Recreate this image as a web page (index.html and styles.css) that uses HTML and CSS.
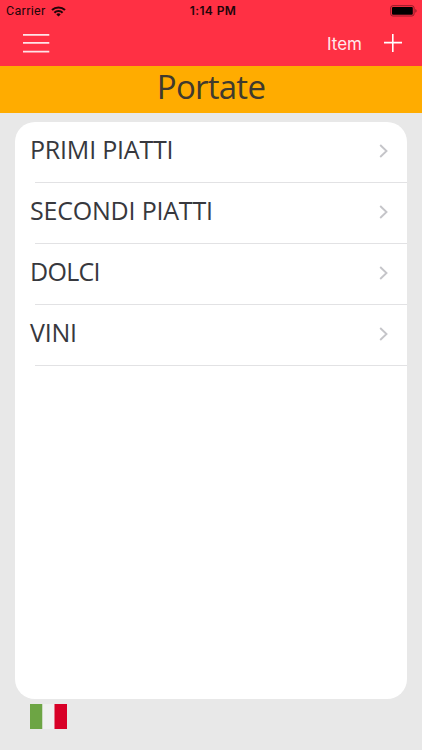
FILE: index.html
```html
<!DOCTYPE html>
<html lang="it">
<head>
<meta charset="utf-8">
<title>Portate</title>
<link rel="stylesheet" href="styles.css">
</head>
<body>
<div class="screen">
  <header class="top">
    <div class="status">
      <div class="carrier"><span>Carrier</span>
        <svg width="15" height="11" viewBox="0 0 15 11"><g fill="none" stroke="#210509" stroke-width="2.1"><path d="M1 4.1a9.3 9.3 0 0 1 13 0"/><path d="M3.4 6.7a5.8 5.8 0 0 1 8.2 0"/></g><path d="M7.5 10.6 5.3 8.4a3.1 3.1 0 0 1 4.4 0z" fill="#210509"/></svg>
      </div>
      <div class="time">1:14 PM</div>
      <div class="power">
        <svg width="28" height="12" viewBox="0 0 28 12"><rect x=".7" y=".7" width="23.4" height="10.3" rx="2.2" fill="none" stroke="#8f1b28"/><rect x="2" y="2" width="20.8" height="7.7" rx="1" fill="#000"/><path d="M25.3 4c1.8.5 1.8 3.2 0 3.7z" fill="#8f1b28"/></svg>
      </div>
    </div>
    <nav class="bar">
      <svg width="27" height="20" viewBox="0 0 27 20"><path d="M0 1.8h26.3M0 9.8h26.3M0 18.7h26.3" stroke="#ffe4e7" stroke-width="1.8"/></svg>
      <div class="actions">
        <span class="item">Item</span>
        <svg width="18" height="18" viewBox="0 0 18 18"><path d="M0 8.6h18M8.8 0v18" stroke="#fff" stroke-width="1.6"/></svg>
      </div>
    </nav>
  </header>
  <h1 class="title"><span>Portate</span></h1>
  <main class="card">
    <ul class="menu">
      <li class="row"><span class="primi">PRIMI PIATTI</span><svg width="10" height="14" viewBox="0 0 10 14"><path d="m1.2 1 6.3 6-6.3 6"/></svg></li>
      <li class="row"><span class="secondi">SECONDI PIATTI</span><svg width="10" height="14" viewBox="0 0 10 14"><path d="m1.2 1 6.3 6-6.3 6"/></svg></li>
      <li class="row"><span class="dolci">DOLCI</span><svg width="10" height="14" viewBox="0 0 10 14"><path d="m1.2 1 6.3 6-6.3 6"/></svg></li>
      <li class="row"><span class="vini">VINI</span><svg width="10" height="14" viewBox="0 0 10 14"><path d="m1.2 1 6.3 6-6.3 6"/></svg></li>
    </ul>
  </main>
  <footer class="foot">
    <svg width="37" height="25" viewBox="0 0 37 25"><path fill="#6da544" d="M0 0h12.5v25H0z"/><path fill="#f0f0f0" d="M12.5 0h12v25h-12z"/><path fill="#d80027" d="M24.5 0H37v25H24.5z"/></svg>
  </footer>
</div>
</body>
</html>
```
FILE: styles.css
```css
* { box-sizing: border-box; }
body { margin: 0; background: #e8e8e8; font-family: "Open Sans", "Noto Sans", sans-serif; color: #37383d; }
svg { display: block; flex: none; }
.screen { width: 422px; height: 750px; display: flex; flex-direction: column; background: #e8e8e8; overflow: hidden; }
.top { height: 66px; flex: none; background: #ff3044; }
.status { height: 22px; display: grid; grid-template-columns: 1fr auto 1fr; align-items: center; padding: 0 4px 0 6px; font: 12.5px/22px Roboto, sans-serif; color: #210509; }
.carrier { display: flex; align-items: center; gap: 5px; letter-spacing: .32px; }
.time { font-weight: 600; letter-spacing: .4px; font-family: Inter, sans-serif; font-size: 12px; padding-left: 2px; }
.power { justify-self: end; }
.bar { height: 44px; display: flex; justify-content: space-between; padding: 11px 20px 0 23px; }
.actions { display: flex; gap: 22px; padding-top: 1px; }
.item { font: 17px/20px Inter, sans-serif; color: #ffe8eb; }
.title { height: 47px; flex: none; margin: 0; background: #ffac00; text-align: center; font-size: 33px; line-height: 41px; font-weight: 500; letter-spacing: -.75px; color: #403a2e; }
.card { height: 577px; flex: none; margin: 9px 15px 0; background: #fff; border-radius: 20px; overflow: hidden; }
.menu { list-style: none; margin: 0; padding: 0; }
.row { height: 61px; display: flex; justify-content: space-between; align-items: center; padding: 0 18px 0 15px; font-size: 25px; line-height: 34px; background: linear-gradient(#e2e2e4, #e2e2e4) 20px 100% / 100% 1px no-repeat; }
.row span { margin-top: -7px; white-space: nowrap; letter-spacing: -.2px; }
.row .dolci { letter-spacing: -.7px; }
.row svg { margin-top: -3px; }
.row path { fill: none; stroke: #c5c5c9; stroke-width: 1.9; }
.foot { padding: 5px 30px 0; }
```
